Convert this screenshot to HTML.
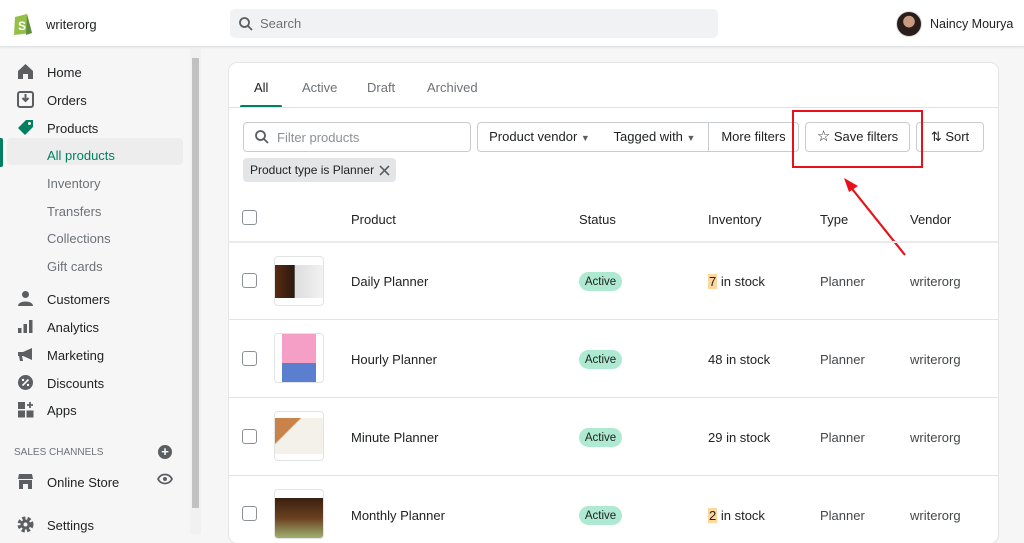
<!DOCTYPE html><html><head><style>
*{box-sizing:border-box;margin:0;padding:0}
body{width:1024px;height:534px;overflow:hidden;background:#f6f6f7;font-family:"Liberation Sans",sans-serif;color:#202223;position:relative;font-size:13px}
.a{position:absolute;white-space:nowrap}
.top{left:0;top:0;width:1024px;height:47px;background:#fff;border-bottom:1px solid #e1e3e5;box-shadow:0 1px 2px rgba(0,0,0,.06)}
.nav{left:47px;font-size:13px;color:#202223}
.sub{left:47px;color:#6d7175;font-size:13px}
.ic{left:17px}
.card{left:229px;top:63px;width:769px;height:480px;background:#fff;border-radius:8px;box-shadow:0 0 0 1px #e4e5e7}
.btn{top:122px;height:30px;border:1px solid #c9cccf;background:#fff;font-size:13px;line-height:28px;text-align:center;color:#202223}
.cb{left:242px;width:15px;height:15px;border:1.5px solid #8c9196;border-radius:3px}
.line{left:229px;width:769px;height:1px;background:#e1e3e5}
.th{top:212px;font-size:13px}
.thumb{left:274px;width:50px;height:50px;border:1px solid #e1e3e5;border-radius:4px;background:#fff;overflow:hidden}
.pill{left:579px;width:43px;height:19px;border-radius:10px;background:#aee9d1;font-size:11.5px;line-height:20px;text-align:center;color:#202223;margin-top:1px}
</style></head><body>
<div class="a top"></div>
<svg class="a" style="left:12px;top:11px" width="22" height="25" viewBox="0 0 22 25"><path d="M3 6 L15 3 L20 22 L2 24 Z" fill="#95bf47"/><path d="M15 3 L20 22 L14 24 Z" fill="#5e8e3e"/><text x="6" y="19" font-size="12" font-weight="bold" fill="#fff" font-family="Liberation Sans">S</text></svg>
<div class="a" style="left:46px;top:17px;font-size:13px">writerorg</div>
<div class="a" style="left:230px;top:9px;width:488px;height:29px;background:#f1f2f3;border-radius:5px"></div>
<svg class="a" style="left:238px;top:16px" width="16" height="16" viewBox="0 0 16 16"><circle cx="6.5" cy="6.5" r="4.5" stroke="#5c5f62" stroke-width="1.8" fill="none"/><path d="M10 10l4 4" stroke="#5c5f62" stroke-width="1.8"/></svg>
<div class="a" style="left:260px;top:16px;color:#6d7175">Search</div>
<div class="a" style="left:896px;top:11px;width:26px;height:26px;border-radius:50%;background:radial-gradient(circle at 50% 40%,#c89a80 0 30%,#2a1e1a 32%);border:1px solid #ddd"></div>
<div class="a" style="left:930px;top:17px;font-size:12.5px">Naincy Mourya</div>
<!-- sidebar -->
<div class="a" style="left:190px;top:48px;width:11px;height:486px;background:#f1f1f1"></div>
<div class="a" style="left:192px;top:58px;width:7px;height:450px;background:#c1c1c1"></div>
<svg class="a ic" style="top:63px" width="17" height="17" viewBox="0 0 17 17"><path d="M1 8 L8.5 1 L16 8 V16 H11 V11 H6 V16 H1Z" fill="#5c5f62"/></svg><div class="a nav" style="top:65px">Home</div>
<svg class="a ic" style="top:91px" width="17" height="17" viewBox="0 0 17 17"><rect x="1" y="1" width="15" height="15" rx="2" fill="none" stroke="#5c5f62" stroke-width="2"/><path d="M8.5 3v7M5.5 7l3 3 3-3" stroke="#5c5f62" stroke-width="2" fill="none"/></svg><div class="a nav" style="top:93px">Orders</div>
<svg class="a ic" style="top:119px" width="17" height="17" viewBox="0 0 17 17"><path d="M9 1 H16 V8 L8 16 L1 9 Z" fill="#008060"/><circle cx="12.5" cy="4.5" r="1.5" fill="#fff"/></svg><div class="a nav" style="top:121px">Products</div>
<div class="a" style="left:0;top:138px;width:3px;height:29px;background:#008060;border-radius:0 2px 2px 0"></div>
<div class="a" style="left:7px;top:138px;width:176px;height:27px;background:#ededee;border-radius:4px"></div>
<div class="a sub" style="top:148px;color:#008060">All products</div>
<div class="a sub" style="top:176px">Inventory</div>
<div class="a sub" style="top:204px">Transfers</div>
<div class="a sub" style="top:231px">Collections</div>
<div class="a sub" style="top:259px">Gift cards</div>
<svg class="a ic" style="top:290px" width="17" height="17" viewBox="0 0 17 17"><circle cx="8.5" cy="4.5" r="3.5" fill="#5c5f62"/><path d="M1 16 C1 10 16 10 16 16Z" fill="#5c5f62"/></svg><div class="a nav" style="top:292px">Customers</div>
<svg class="a ic" style="top:318px" width="17" height="17" viewBox="0 0 17 17"><rect x="1" y="10" width="3.5" height="5" fill="#5c5f62"/><rect x="6.5" y="6" width="3.5" height="9" fill="#5c5f62"/><rect x="12" y="2" width="3.5" height="13" fill="#5c5f62"/></svg><div class="a nav" style="top:320px">Analytics</div>
<svg class="a ic" style="top:346px" width="17" height="17" viewBox="0 0 17 17"><path d="M1 6 H6 L15 2 V14 L6 10 H5 L6 15 H3 L2 10 H1Z" fill="#5c5f62"/></svg><div class="a nav" style="top:348px">Marketing</div>
<svg class="a ic" style="top:374px" width="17" height="17" viewBox="0 0 17 17"><circle cx="8.5" cy="8.5" r="7.5" fill="#5c5f62"/><path d="M5.5 11.5l6-6" stroke="#fff" stroke-width="1.6"/><circle cx="6" cy="6" r="1.2" fill="#fff"/><circle cx="11" cy="11" r="1.2" fill="#fff"/></svg><div class="a nav" style="top:376px">Discounts</div>
<svg class="a ic" style="top:401px" width="17" height="17" viewBox="0 0 17 17"><rect x="1" y="1" width="7" height="7" fill="#5c5f62"/><rect x="1" y="9.5" width="7" height="7" fill="#5c5f62"/><rect x="9.5" y="9.5" width="7" height="7" fill="#5c5f62"/><path d="M13 1v6M10 4h6" stroke="#5c5f62" stroke-width="1.8"/></svg><div class="a nav" style="top:403px">Apps</div>
<div class="a" style="left:14px;top:447px;font-size:10px;color:#6d7175">SALES CHANNELS</div>
<div class="a" style="left:158px;top:445px;width:14px;height:14px;border-radius:50%;background:#5c5f62;color:#fff;font-size:13px;line-height:13px;text-align:center;font-weight:bold">+</div>
<svg class="a ic" style="top:473px" width="17" height="17" viewBox="0 0 17 17"><path d="M2 1 H15 L16 6 H1Z" fill="#5c5f62"/><path d="M2 7 H15 V16 H11 V11 H6 V16 H2Z" fill="#5c5f62"/></svg><div class="a nav" style="top:475px">Online Store</div>
<svg class="a" style="left:157px;top:473px" width="16" height="12" viewBox="0 0 16 12"><path d="M1 6 C4 0 12 0 15 6 C12 12 4 12 1 6Z" fill="none" stroke="#5c5f62" stroke-width="1.8"/><circle cx="8" cy="6" r="2" fill="#5c5f62"/></svg>
<svg class="a ic" style="top:516px" width="17" height="17" viewBox="0 0 17 17"><circle cx="8.5" cy="8.5" r="6" fill="none" stroke="#5c5f62" stroke-width="4" stroke-dasharray="3 2"/><circle cx="8.5" cy="8.5" r="5" fill="#5c5f62"/><circle cx="8.5" cy="8.5" r="2" fill="#f6f6f7"/></svg><div class="a nav" style="top:518px">Settings</div>
<!-- card -->
<div class="a card"></div>
<div class="a" style="left:254px;top:80px">All</div>
<div class="a" style="left:240px;top:105px;width:42px;height:3px;background:#008060;border-radius:2px"></div>
<div class="a" style="left:302px;top:80px;color:#6d7175">Active</div>
<div class="a" style="left:367px;top:80px;color:#6d7175">Draft</div>
<div class="a" style="left:427px;top:80px;color:#6d7175">Archived</div>
<div class="a line" style="top:107px"></div>
<div class="a" style="left:243px;top:122px;width:228px;height:30px;border:1px solid #c9cccf;border-radius:4px"></div>
<svg class="a" style="left:254px;top:129px" width="16" height="16" viewBox="0 0 16 16"><circle cx="6.5" cy="6.5" r="4.5" stroke="#5c5f62" stroke-width="1.8" fill="none"/><path d="M10 10l4 4" stroke="#5c5f62" stroke-width="1.8"/></svg>
<div class="a" style="left:277px;top:130px;color:#8c9196">Filter products</div>
<div class="a btn" style="left:477px;width:125px;border-radius:4px 0 0 4px">Product vendor <span style="font-size:9px;color:#5c5f62">&#9660;</span></div>
<div class="a btn" style="left:601px;width:108px;border-left:none">Tagged with <span style="font-size:9px;color:#5c5f62">&#9660;</span></div>
<div class="a btn" style="left:708px;width:91px;border-radius:0 4px 4px 0">More filters</div>
<div class="a btn" style="left:805px;width:105px;border-radius:4px"><span style="font-size:15px">&#9734;</span> Save filters</div>
<div class="a btn" style="left:916px;width:68px;border-radius:4px">&#8645; Sort</div>
<div class="a" style="left:792px;top:110px;width:131px;height:58px;border:2px solid #e8101a"></div>
<svg class="a" style="left:840px;top:175px" width="70" height="85"><path d="M65 80 L9 10" stroke="#e8101a" stroke-width="2.2"/><path d="M4 3 L18 11 L9 17 Z" fill="#e8101a"/></svg>
<div class="a" style="left:243px;top:158px;width:153px;height:24px;background:#e4e5e7;border-radius:4px;line-height:24px;padding-left:7px;font-size:12px">Product type is Planner</div>
<svg class="a" style="left:379px;top:165px" width="11" height="11" viewBox="0 0 11 11"><path d="M1 1l9 9M10 1l-9 9" stroke="#5c5f62" stroke-width="1.6"/></svg>
<div class="a cb" style="top:210px"></div>
<div class="a th" style="left:351px">Product</div>
<div class="a th" style="left:579px">Status</div>
<div class="a th" style="left:708px">Inventory</div>
<div class="a th" style="left:820px">Type</div>
<div class="a th" style="left:910px">Vendor</div>
<div class="a line" style="top:241px;height:2px;background:#ebebeb"></div>
<div class="a line" style="top:319px"></div>
<div class="a line" style="top:397px"></div>
<div class="a line" style="top:475px"></div>
<!-- rows -->
<div class="a cb" style="top:273px"></div>
<div class="a thumb" style="top:256px"><div style="margin-top:8px;height:33px;background:linear-gradient(90deg,#5a2a10,#2a1a10 40%,#ddd 42%,#f2f2f2)"></div></div>
<div class="a" style="left:351px;top:274px">Daily Planner</div>
<div class="a pill" style="top:271px">Active</div>
<div class="a" style="left:708px;top:274px"><span style="background:#ffd79d;padding:0 1px">7</span> in stock</div>
<div class="a" style="left:820px;top:274px;color:#44474a">Planner</div><div class="a" style="left:910px;top:274px;color:#44474a">writerorg</div>

<div class="a cb" style="top:351px"></div>
<div class="a thumb" style="top:333px"><div style="margin:0 auto;width:34px;height:48px;background:linear-gradient(#f59fc6 60%,#5b7fcf 60%)"></div></div>
<div class="a" style="left:351px;top:352px">Hourly Planner</div>
<div class="a pill" style="top:349px">Active</div>
<div class="a" style="left:708px;top:352px">48 in stock</div>
<div class="a" style="left:820px;top:352px;color:#44474a">Planner</div><div class="a" style="left:910px;top:352px;color:#44474a">writerorg</div>

<div class="a cb" style="top:429px"></div>
<div class="a thumb" style="top:411px"><div style="margin-top:6px;height:36px;background:linear-gradient(135deg,#c8824a 30%,#f4f0ea 32%)"></div></div>
<div class="a" style="left:351px;top:430px">Minute Planner</div>
<div class="a pill" style="top:427px">Active</div>
<div class="a" style="left:708px;top:430px">29 in stock</div>
<div class="a" style="left:820px;top:430px;color:#44474a">Planner</div><div class="a" style="left:910px;top:430px;color:#44474a">writerorg</div>

<div class="a cb" style="top:506px"></div>
<div class="a thumb" style="top:489px"><div style="margin-top:8px;height:40px;background:linear-gradient(#3a2010,#6a4020 50%,#a0b070)"></div></div>
<div class="a" style="left:351px;top:508px">Monthly Planner</div>
<div class="a pill" style="top:505px">Active</div>
<div class="a" style="left:708px;top:508px"><span style="background:#ffd79d;padding:0 1px">2</span> in stock</div>
<div class="a" style="left:820px;top:508px;color:#44474a">Planner</div><div class="a" style="left:910px;top:508px;color:#44474a">writerorg</div>
</body></html>
